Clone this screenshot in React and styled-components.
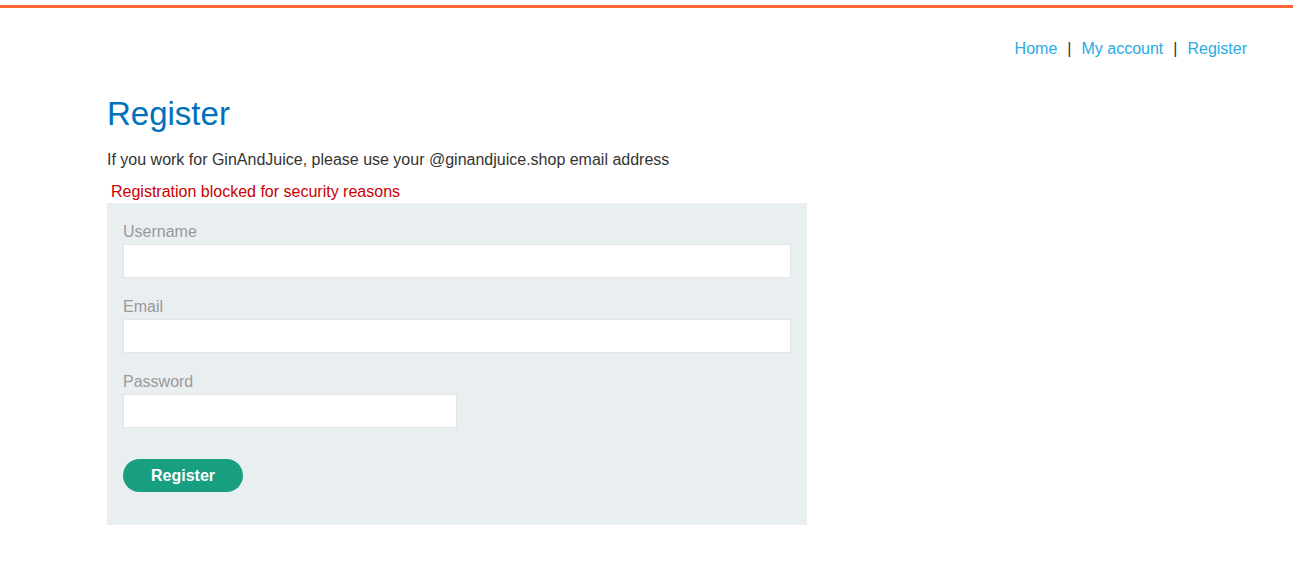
import React from "react";
import styled, { createGlobalStyle } from "styled-components";

const Global = createGlobalStyle`
  html, body { margin: 0; padding: 0; background: #fff; }
  body { font-family: "Liberation Sans", Arial, sans-serif; font-size: 16px; color: #333332; }
  * { box-sizing: border-box; }
`;

const Page = styled.div`
  padding-top: 5px;
`;

const TopBar = styled.div`
  height: 3px;
  background: #ff6633;
`;

const Nav = styled.nav`
  display: flex;
  justify-content: flex-end;
  align-items: center;
  gap: 10px;
  margin-top: 29px;
  padding-right: 46px;
  line-height: 24px;
  font-size: 16px;
`;

const NavLink = styled.a`
  color: #29abe2;
  text-decoration: none;
`;

const Sep = styled.span`
  color: #333332;
`;

const Main = styled.main`
  padding-left: 107px;
`;

const Title = styled.h1`
  margin: 33px 0 0;
  font-size: 33px;
  line-height: 40px;
  font-weight: 400;
  color: #0071bc;
`;

const Intro = styled.p`
  margin: 14px 0 0;
  line-height: 24px;
`;

const Warning = styled.p`
  margin: 8px 0 0;
  padding-left: 4px;
  line-height: 23px;
  color: #cc0000;
`;

const Form = styled.form`
  width: 700px;
  padding: 16px;
  background: #e9eef1;
  display: flex;
  flex-direction: column;
  align-items: flex-start;
`;

const Label = styled.label`
  display: block;
  padding-top: 1px;
  line-height: 24px;
  color: #999;
`;

const Input = styled.input`
  display: block;
  width: ${(p) => (p.$half ? "50%" : "100%")};
  height: 34px;
  margin: 0 0 16px;
  padding: 0 8px;
  border: 1px solid #e4e4e4;
  background: #fff;
  font: inherit;
  outline: none;
`;

const Button = styled.button`
  margin: 15px 0 17px;
  width: 120px;
  height: 33px;
  border: none;
  border-radius: 17px;
  background: #189e80;
  color: #fff;
  font-family: "Liberation Sans", Arial, sans-serif;
  font-size: 16px;
  font-weight: 700;
  cursor: pointer;
`;

export default function App() {
  return (
    <Page>
      <Global />
      <TopBar />
      <Nav>
        <NavLink href="#">Home</NavLink>
        <Sep>|</Sep>
        <NavLink href="#">My account</NavLink>
        <Sep>|</Sep>
        <NavLink href="#">Register</NavLink>
      </Nav>
      <Main>
        <Title>Register</Title>
        <Intro>If you work for GinAndJuice, please use your @ginandjuice.shop email address</Intro>
        <Warning>Registration blocked for security reasons</Warning>
        <Form onSubmit={(e) => e.preventDefault()}>
          <Label htmlFor="username">Username</Label>
          <Input id="username" type="text" />
          <Label htmlFor="email">Email</Label>
          <Input id="email" type="email" />
          <Label htmlFor="password">Password</Label>
          <Input id="password" type="password" $half />
          <Button type="submit">Register</Button>
        </Form>
      </Main>
    </Page>
  );
}
